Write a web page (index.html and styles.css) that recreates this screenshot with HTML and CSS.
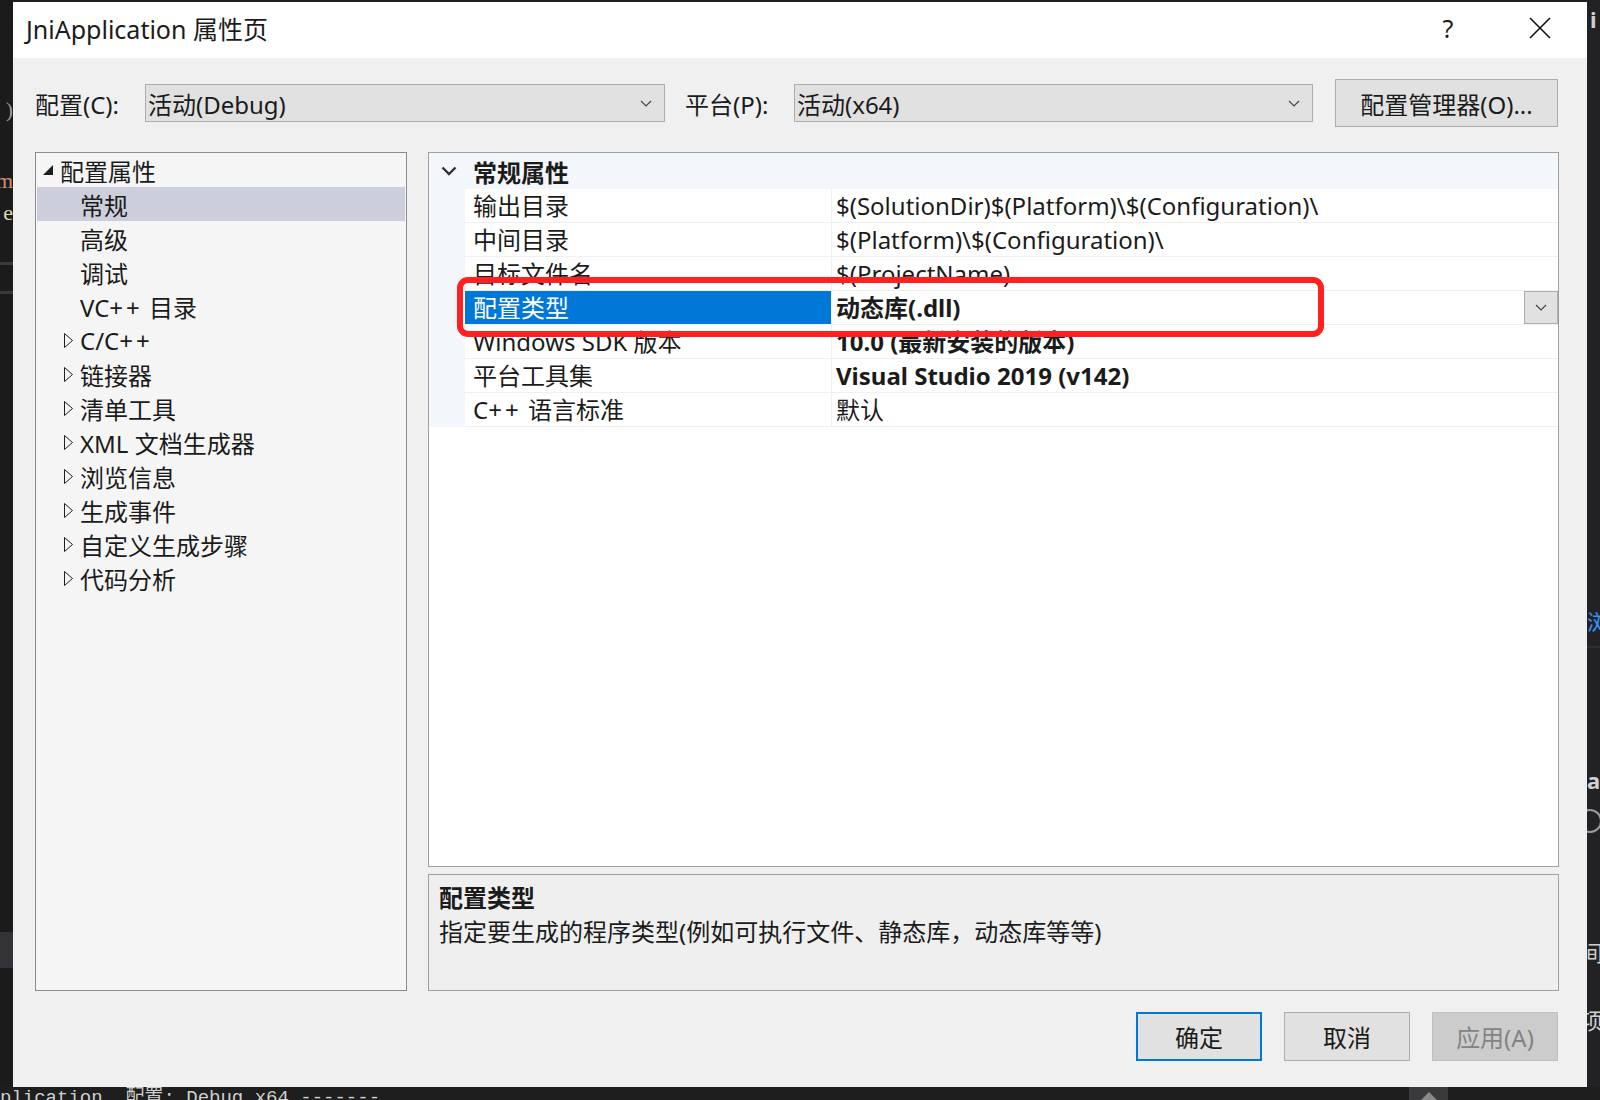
FILE: index.html
```html
<!doctype html>
<html lang="zh-CN">

<head>
  <meta charset="UTF-8" />
  <title>JniApplication 属性页</title>
  <link rel="stylesheet" href="styles.css">
</head>

<body>
  <div class="screen">
    <div class="side side-left">
      <div class="frag frag-paren">)</div>
      <div class="frag frag-m">m</div>
      <div class="frag frag-e">e</div>
      <div class="side-line line-a"></div>
      <div class="side-line line-b"></div>
      <div class="side-block"></div>
    </div>

    <div class="dialog">
      <div class="titlebar">
        <div class="title">JniApplication 属性页</div>
        <div class="title-buttons">
          <div class="title-btn help">?</div>
          <div class="title-btn">
            <svg width="22" height="22" viewBox="0 0 22 22">
              <path d="M1 1 L21 21 M21 1 L1 21" stroke="#111" stroke-width="1.6" fill="none" />
            </svg>
          </div>
        </div>
      </div>

      <div class="toolbar">
        <div class="tb-label cfg-label">配置(C):</div>
        <div class="combo combo-cfg">
          <span>活动(Debug)</span>
          <svg class="combo-arrow" width="12" height="7" viewBox="0 0 12 7">
            <path d="M1 1 L6 6 L11 1" stroke="#444" stroke-width="1.2" fill="none" />
          </svg>
        </div>
        <div class="tb-label plat-label">平台(P):</div>
        <div class="combo combo-plat">
          <span>活动(x64)</span>
          <svg class="combo-arrow" width="12" height="7" viewBox="0 0 12 7">
            <path d="M1 1 L6 6 L11 1" stroke="#444" stroke-width="1.2" fill="none" />
          </svg>
        </div>
        <div class="btn btn-manager">配置管理器(O)...</div>
      </div>

      <div class="main">
        <div class="tree">
          <div class="tree-row level0">
            <span class="toggle">
              <svg width="10" height="10" viewBox="0 0 10 10"><polygon points="10,0 10,10 0,10" fill="#1e1e1e" /></svg>
            </span>
            <span>配置属性</span>
          </div>
          <div class="tree-row level1 selected"><span class="toggle"></span><span>常规</span></div>
          <div class="tree-row level1"><span class="toggle"></span><span>高级</span></div>
          <div class="tree-row level1"><span class="toggle"></span><span>调试</span></div>
          <div class="tree-row level1"><span class="toggle"></span><span>VC<span class="pp">++</span> 目录</span></div>
          <div class="tree-row level1">
            <span class="toggle"><svg width="10" height="15" viewBox="0 0 10 15"><polygon points="0.5,0.5 8.5,7.5 0.5,14.5" fill="none" stroke="#1e1e1e" /></svg></span>
            <span>C/C<span class="pp">++</span></span>
          </div>
          <div class="tree-row level1">
            <span class="toggle"><svg width="10" height="15" viewBox="0 0 10 15"><polygon points="0.5,0.5 8.5,7.5 0.5,14.5" fill="none" stroke="#1e1e1e" /></svg></span>
            <span>链接器</span>
          </div>
          <div class="tree-row level1">
            <span class="toggle"><svg width="10" height="15" viewBox="0 0 10 15"><polygon points="0.5,0.5 8.5,7.5 0.5,14.5" fill="none" stroke="#1e1e1e" /></svg></span>
            <span>清单工具</span>
          </div>
          <div class="tree-row level1">
            <span class="toggle"><svg width="10" height="15" viewBox="0 0 10 15"><polygon points="0.5,0.5 8.5,7.5 0.5,14.5" fill="none" stroke="#1e1e1e" /></svg></span>
            <span>XML 文档生成器</span>
          </div>
          <div class="tree-row level1">
            <span class="toggle"><svg width="10" height="15" viewBox="0 0 10 15"><polygon points="0.5,0.5 8.5,7.5 0.5,14.5" fill="none" stroke="#1e1e1e" /></svg></span>
            <span>浏览信息</span>
          </div>
          <div class="tree-row level1">
            <span class="toggle"><svg width="10" height="15" viewBox="0 0 10 15"><polygon points="0.5,0.5 8.5,7.5 0.5,14.5" fill="none" stroke="#1e1e1e" /></svg></span>
            <span>生成事件</span>
          </div>
          <div class="tree-row level1">
            <span class="toggle"><svg width="10" height="15" viewBox="0 0 10 15"><polygon points="0.5,0.5 8.5,7.5 0.5,14.5" fill="none" stroke="#1e1e1e" /></svg></span>
            <span>自定义生成步骤</span>
          </div>
          <div class="tree-row level1">
            <span class="toggle"><svg width="10" height="15" viewBox="0 0 10 15"><polygon points="0.5,0.5 8.5,7.5 0.5,14.5" fill="none" stroke="#1e1e1e" /></svg></span>
            <span>代码分析</span>
          </div>
        </div>

        <div class="right-col">
          <div class="grid">
            <div class="category">
              <span class="cat-toggle">
                <svg width="16" height="10" viewBox="0 0 16 10">
                  <path d="M1.5 1.5 L8 8 L14.5 1.5" stroke="#333" stroke-width="2.4" fill="none" />
                </svg>
              </span>
              <span class="cat-name">常规属性</span>
            </div>
            <div class="prop-row">
              <div class="gutter"></div>
              <div class="prop-name">输出目录</div>
              <div class="prop-value">$(SolutionDir)$(Platform)\$(Configuration)\</div>
            </div>
            <div class="prop-row">
              <div class="gutter"></div>
              <div class="prop-name">中间目录</div>
              <div class="prop-value">$(Platform)\$(Configuration)\</div>
            </div>
            <div class="prop-row">
              <div class="gutter"></div>
              <div class="prop-name">目标文件名</div>
              <div class="prop-value">$(ProjectName)</div>
            </div>
            <div class="prop-row active">
              <div class="gutter"></div>
              <div class="prop-name">配置类型</div>
              <div class="prop-value bold">
                <span>动态库(.dll)</span>
                <div class="drop-btn">
                  <svg width="12" height="7" viewBox="0 0 12 7">
                    <path d="M1 1 L6 6 L11 1" stroke="#444" stroke-width="1.2" fill="none" />
                  </svg>
                </div>
              </div>
            </div>
            <div class="prop-row">
              <div class="gutter"></div>
              <div class="prop-name">Windows SDK 版本</div>
              <div class="prop-value bold">10.0 (最新安装的版本)</div>
            </div>
            <div class="prop-row">
              <div class="gutter"></div>
              <div class="prop-name">平台工具集</div>
              <div class="prop-value bold">Visual Studio 2019 (v142)</div>
            </div>
            <div class="prop-row">
              <div class="gutter"></div>
              <div class="prop-name">C<span class="pp">++</span> 语言标准</div>
              <div class="prop-value">默认</div>
            </div>

            <div class="highlight"></div>
          </div>

          <div class="description">
            <div class="desc-title">配置类型</div>
            <div class="desc-text">指定要生成的程序类型(例如可执行文件、静态库，动态库等等)</div>
          </div>
        </div>
      </div>

      <div class="footer">
        <div class="btn btn-ok">确定</div>
        <div class="btn">取消</div>
        <div class="btn btn-disabled">应用(A)</div>
      </div>
    </div>

    <div class="side side-right">
      <div class="frag-r frag-i">i</div>
      <div class="frag-r frag-blue">浏</div>
      <div class="side-line line-c"></div>
      <div class="frag-r frag-a">a</div>
      <div class="frag-r frag-circle"></div>
      <div class="frag-r frag-jian">间</div>
      <div class="frag-r frag-xiang">项</div>
    </div>
  </div>

  <div class="console">
    <span class="console-text">plication, 配置: Debug x64 -------</span>
    <div class="console-up">
      <svg width="16" height="8" viewBox="0 0 16 8"><polygon points="0,8 8,0 16,8" fill="#8a8a8a" /></svg>
    </div>
  </div>
</body>

</html>
```

FILE: styles.css
```css
body {
  margin: 0;
  padding: 0;
  background-color: #1e1e1e;
  font-family: "Noto Sans", "Noto Sans CJK SC", sans-serif;
  color: #1b1b1b;
  overflow: hidden;
  width: 1600px;
  height: 1100px;
}

.screen {
  display: flex;
  height: 1087px;
}

/* dark editor fragments around the dialog */
.side {
  width: 13px;
  flex: 0 0 13px;
  overflow: hidden;
  display: flex;
  flex-direction: column;
}

.side-left {
  background-color: #1b1b1b;
}

.frag {
  display: flex;
  justify-content: flex-end;
  font-family: "Liberation Serif", serif;
  font-size: 22px;
  line-height: 32px;
  white-space: nowrap;
}

.frag-paren {
  margin-top: 94px;
  color: #9a9a9a;
}

.frag-m {
  margin-top: 39px;
  color: #ce9178;
}

.frag-e {
  color: #dcdcaa;
}

.side-line {
  height: 3px;
  background-color: #3a3a3a;
}

.line-a {
  margin-top: 33px;
}

.line-b {
  margin-top: 26px;
}

.side-block {
  margin-top: 638px;
  height: 36px;
  background-color: #333337;
}

.side-right {
  background-color: #222224;
}

.frag-r {
  font-family: "Noto Sans", "Noto Sans CJK SC", sans-serif;
  font-size: 22px;
  line-height: 30px;
  color: #d0d0d0;
  white-space: nowrap;
}

.frag-i {
  margin-top: 4px;
  padding-left: 3px;
  font-weight: 700;
}

.frag-blue {
  margin-top: 572px;
  color: #3794ff;
}

.line-c {
  margin-top: 10px;
  height: 2px;
  background-color: #2e2e30;
}

.frag-a {
  margin-top: 117px;
  font-weight: 700;
}

.frag-circle {
  margin-top: 14px;
  width: 20px;
  height: 20px;
  border-radius: 50%;
  border: 2px solid #9a9a9a;
  margin-left: -9px;
}

.frag-jian {
  margin-top: 104px;
  margin-left: -6px;
}

.frag-xiang {
  margin-top: 38px;
  margin-left: -6px;
}

/* dialog */
.dialog {
  margin-top: 2px;
  width: 1574px;
  height: 1085px;
  background-color: #f0f0f0;
  display: flex;
  flex-direction: column;
}

.titlebar {
  box-sizing: border-box;
  height: 56px;
  background-color: #ffffff;
  display: flex;
  align-items: center;
  justify-content: space-between;
  padding: 0 24px 4px 13px;
}

.title {
  font-size: 25px;
}

.title-buttons {
  display: flex;
  gap: 46px;
}

.title-btn {
  width: 46px;
  height: 40px;
  display: flex;
  align-items: center;
  justify-content: center;
}

.help {
  font-size: 25px;
}

.toolbar {
  display: flex;
  align-items: center;
  padding: 21px 29px 0 22px;
  height: 48px;
  font-size: 24px;
}

.tb-label {
  flex: 0 0 auto;
}

.cfg-label {
  width: 110px;
}

.plat-label {
  margin-left: 20px;
  width: 109px;
}

.combo {
  box-sizing: border-box;
  height: 38px;
  background-color: #e1e1e1;
  border: 1px solid #adadad;
  display: flex;
  align-items: center;
  justify-content: space-between;
  padding: 0 12px 0 2px;
}

.combo-cfg {
  width: 520px;
}

.combo-plat {
  width: 519px;
}

.btn {
  box-sizing: border-box;
  background-color: #e1e1e1;
  border: 1px solid #adadad;
  display: flex;
  align-items: center;
  justify-content: center;
  font-size: 24px;
}

.btn-manager {
  margin-left: 22px;
  width: 223px;
  height: 48px;
}

.pp {
  letter-spacing: 3px;
}

.main {
  display: flex;
  gap: 21px;
  margin-top: 25px;
  padding: 0 28px 0 22px;
  height: 839px;
}

.tree {
  box-sizing: border-box;
  width: 372px;
  flex: 0 0 372px;
  border: 1px solid #8c8c8c;
  background-color: #f5f5f5;
  padding: 0 1px;
  font-size: 24px;
}

.tree-row {
  height: 34px;
  display: flex;
  align-items: center;
  white-space: nowrap;
}

.tree-row .toggle {
  display: flex;
  align-items: center;
}

.level0 {
  padding-left: 6px;
}

.level0 .toggle {
  width: 17px;
}

.level1 {
  padding-left: 27px;
}

.level1 .toggle {
  width: 16px;
}

.tree-row.selected {
  background-color: #cccedb;
}

.right-col {
  flex: 1;
  display: flex;
  flex-direction: column;
  gap: 7px;
}

.grid {
  position: relative;
  flex: 1;
  box-sizing: border-box;
  border: 1px solid #a0a0a0;
  background-color: #ffffff;
  font-size: 24px;
}

.category {
  height: 36px;
  background-color: #f3f6fb;
  display: flex;
  align-items: center;
}

.cat-toggle {
  box-sizing: border-box;
  width: 44px;
  padding-left: 12px;
  display: flex;
  align-items: center;
}

.cat-name {
  font-weight: 700;
}

.prop-row {
  display: flex;
  height: 34px;
}

.gutter {
  width: 36px;
  flex: 0 0 36px;
  background-color: #f3f6fb;
}

.prop-name {
  box-sizing: border-box;
  width: 367px;
  flex: 0 0 367px;
  padding-left: 8px;
  border-right: 1px solid #f0f0f0;
  border-bottom: 1px solid #f0f0f0;
  line-height: 33px;
  white-space: nowrap;
}

.prop-value {
  flex: 1;
  padding-left: 4px;
  border-bottom: 1px solid #f0f0f0;
  line-height: 33px;
  white-space: nowrap;
  display: flex;
  justify-content: space-between;
}

.prop-value.bold {
  font-weight: 700;
}

.prop-row.active .prop-name {
  background-color: #0078d7;
  color: #ffffff;
}

.drop-btn {
  box-sizing: border-box;
  width: 34px;
  height: 33px;
  background-color: #e1e1e1;
  border: 1px solid #adadad;
  display: flex;
  align-items: center;
  justify-content: center;
}

/* red annotation box drawn over the grid */
.highlight {
  position: absolute;
  left: 28px;
  top: 124px;
  width: 867px;
  height: 60px;
  box-sizing: border-box;
  border: 6px solid #ff2020;
  border-radius: 11px;
}

.description {
  box-sizing: border-box;
  height: 117px;
  border: 1px solid #a0a0a0;
  background-color: #efefef;
  padding: 6px 10px 0 10px;
  font-size: 24px;
  line-height: 34px;
}

.desc-title {
  font-weight: 700;
}

.footer {
  display: flex;
  justify-content: flex-end;
  gap: 22px;
  margin-top: 21px;
  padding-right: 29px;
}

.footer .btn {
  width: 126px;
  height: 49px;
}

.btn-ok {
  border: 2px solid #0078d7 !important;
}

.btn-disabled {
  background-color: #cccccc !important;
  border-color: #bfbfbf !important;
  color: #838383;
}

.console {
  height: 13px;
  overflow: hidden;
  display: flex;
  background-color: #1e1e1e;
}

.console-text {
  font-family: "Liberation Mono", "Noto Sans CJK SC", monospace;
  font-size: 19px;
  line-height: 22px;
  color: #cfcfcf;
  white-space: nowrap;
}

.console-up {
  margin-left: auto;
  margin-right: 152px;
  width: 39px;
  height: 13px;
  background-color: #3a3a3c;
  display: flex;
  align-items: flex-end;
  justify-content: center;
}
```
